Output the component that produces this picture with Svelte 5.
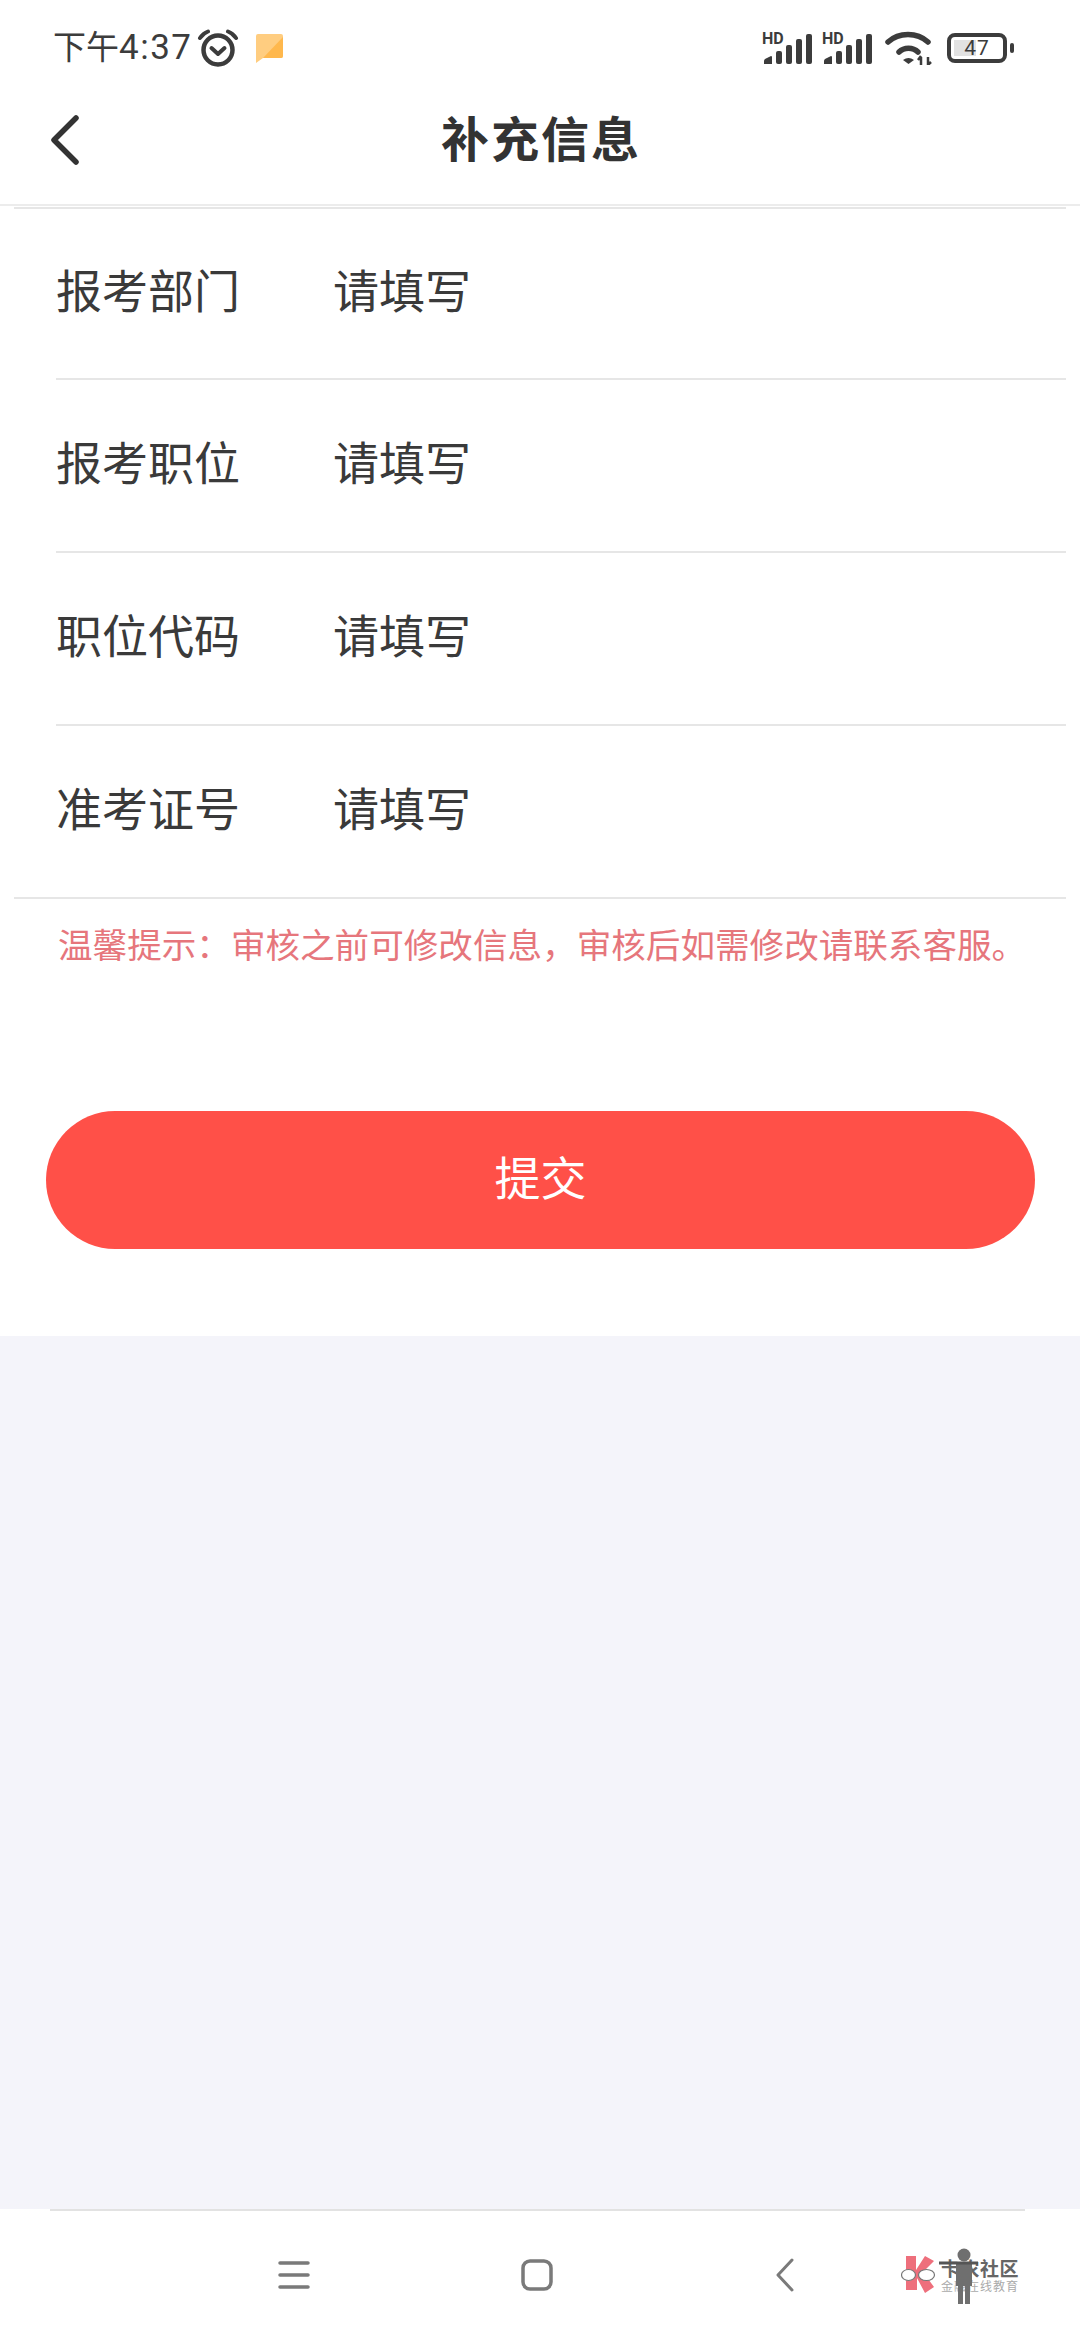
<script>
  const fields = [
    { label: "报考部门", value: "请填写" },
    { label: "报考职位", value: "请填写" },
    { label: "职位代码", value: "请填写" },
    { label: "准考证号", value: "请填写" }
  ];
</script>

<main>
  <div class="top">
    <div class="status">
      <div class="status-left">
        <span class="time">下午<span class="clock">4:37</span></span>
        <svg class="alarm" width="44" height="38" viewBox="0 0 44 38">
          <circle cx="22" cy="21" r="14.500" fill="none" stroke="#3c3c3c" stroke-width="4.500" />
          <path d="M15.500 19l6.500 6 6.500-6" fill="none" stroke="#3c3c3c" stroke-width="4" stroke-linecap="round" stroke-linejoin="round" />
          <path d="M4 9C6 6 8 4 12 2.500M40 9C38 6 36 4 32 2.500" fill="none" stroke="#3c3c3c" stroke-width="4" stroke-linecap="round" />
        </svg>
        <svg class="note" width="27" height="29" viewBox="0 0 27 29">
          <path d="M2 0h23a2 2 0 0 1 2 2v20a2 2 0 0 1-2 2H7l-7 5V2a2 2 0 0 1 2-2z" fill="#ffcd80" />
          <path d="M27 3v19a2 2 0 0 1-2 2H7z" fill="#ffb84d" />
        </svg>
      </div>
      <div class="status-right">
        {#each [0, 1] as s}
          <svg class="signal" width="50" height="34" viewBox="0 0 50 34">
            <text x="0" y="13" class="hd">HD</text>
            <path d="M2 33v-3q0-1 1-2l6-3q1 0 1 1v7z" fill="#3c3c3c" />
            <rect x="14" y="20" width="6" height="13" rx="2" fill="#3c3c3c" />
            <rect x="24" y="14" width="6" height="19" rx="2" fill="#3c3c3c" />
            <rect x="34" y="8" width="6" height="25" rx="2" fill="#3c3c3c" />
            <rect x="44" y="3" width="6" height="30" rx="2" fill="#3c3c3c" />
          </svg>
        {/each}
        <svg class="wifi" width="48" height="34" viewBox="0 0 48 34">
          <path d="M3 11C14 1 32 1 43 11" fill="none" stroke="#3c3c3c" stroke-width="5.500" stroke-linecap="round" />
          <path d="M14 21C19 16 28 16 33 21" fill="none" stroke="#3c3c3c" stroke-width="5.500" stroke-linecap="round" />
          <path d="M18 29q5.500-4 11 0l-5.500 4z" fill="#3c3c3c" />
          <path d="M36 34v-8m-3 3l3-4M43 26v8m3-3l-3 3" fill="none" stroke="#3c3c3c" stroke-width="2.500" />
        </svg>
        <div class="battery">
          <div class="battery-body">
            <span class="battery-fill"></span>
            <span class="battery-num">47</span>
          </div>
          <span class="battery-tip"></span>
        </div>
      </div>
    </div>

    <header>
      <svg class="back" width="30" height="50" viewBox="0 0 30 50">
        <path d="M26 3L4 25 26 47" fill="none" stroke="#333" stroke-width="5.500" stroke-linecap="round" stroke-linejoin="round" />
      </svg>
      <h1>补充信息</h1>
    </header>
  </div>

  <section class="card">
    <div class="form">
      {#each fields as f}
        <div class="row">
          <div class="row-inner">
            <span class="label">{f.label}</span>
            <span class="value">{f.value}</span>
          </div>
        </div>
      {/each}
    </div>
    <p class="tip">温馨提示：审核之前可修改信息，审核后如需修改请联系客服。</p>
    <button>提交</button>
  </section>

  <div class="filler"></div>

  <footer>
    <svg class="nav-menu" width="32" height="30" viewBox="0 0 32 30">
      <path d="M2 3h28M2 15h28M2 27h28" stroke="#7a7a7a" stroke-width="3.500" stroke-linecap="round" />
    </svg>
    <svg class="nav-home" width="32" height="32" viewBox="0 0 32 32">
      <rect x="2" y="2" width="28" height="28" rx="7" fill="none" stroke="#7a7a7a" stroke-width="3.500" />
    </svg>
    <svg class="nav-back" width="18" height="34" viewBox="0 0 18 34">
      <path d="M16 2L2 17l14 15" fill="none" stroke="#7a7a7a" stroke-width="3" stroke-linecap="round" stroke-linejoin="round" />
    </svg>
    <div class="logo">
      <svg width="36" height="38" viewBox="0 0 36 38">
        <path d="M5 0h10v14l9-14 9 5-11 11 11 15-9 6-8-15v12H5z" fill="#ee6f7c" />
        <ellipse cx="7.500" cy="19" rx="7" ry="5.500" fill="#fff" stroke="#777" stroke-width="1.200" />
        <ellipse cx="25.500" cy="19" rx="8" ry="5.500" fill="#fff" stroke="#777" stroke-width="1.200" />
      </svg>
      <div class="logo-text">
        <span class="logo-name">卡农社区</span>
        <span class="logo-sub">金融在线教育</span>
      </div>
      <svg class="person" width="78" height="56" viewBox="0 0 78 56">
        <circle cx="39" cy="7" r="6.500" fill="#6f6f6f" />
        <path d="M31 14h16v24h-2v18h-5V38h-2v18h-5V38h-2z" fill="#6f6f6f" />
        <path d="M14 15h39" stroke="#555" stroke-width="3" />
      </svg>
    </div>
  </footer>
</main>

<style>
  :global(body) {
    background: #f4f4fa;
  }

  main {
    width: 1080px;
    height: 2340px;
    display: flex;
    flex-direction: column;
    font-family: "Noto Sans CJK SC", "Noto Sans", sans-serif;
    color: #333;
  }

  .top {
    background: #fff;
    border-bottom: 2px solid #ececec;
  }

  .status {
    height: 92px;
    padding: 4px 66px 0 53px;
    display: flex;
    align-items: center;
    justify-content: space-between;
    box-sizing: border-box;
  }

  .status-left,
  .status-right {
    display: flex;
    align-items: center;
  }

  .time {
    font-size: 33px;
    font-family: Roboto, "Noto Sans CJK SC", sans-serif;
    color: #3c3c3c;
    line-height: 40px;
    width: 143px;
    white-space: nowrap;
  }

  .clock {
    font-size: 35px;
    letter-spacing: 1.500px;
  }

  .note {
    margin-left: 16px;
  }

  .signal {
    margin-right: 10px;
    overflow: visible;
  }

  .hd {
    font-family: Roboto, sans-serif;
    font-weight: 700;
    font-size: 16px;
    fill: #3c3c3c;
  }

  .wifi {
    margin: 0 14px 0 3px;
  }

  .battery {
    display: flex;
    align-items: center;
    gap: 3px;
  }

  .battery-body {
    position: relative;
    width: 60px;
    height: 30px;
    box-sizing: border-box;
    border: 4px solid #3c3c3c;
    border-radius: 8px;
    display: flex;
    align-items: center;
    justify-content: center;
  }

  .battery-fill {
    position: absolute;
    left: 3px;
    top: 3px;
    bottom: 3px;
    width: 22px;
    background: #e2e2e2;
  }

  .battery-num {
    position: relative;
    font-family: Roboto, sans-serif;
    font-size: 21px;
    line-height: 22px;
    letter-spacing: 1px;
    color: #3c3c3c;
  }

  .battery-tip {
    width: 4px;
    height: 10px;
    border-radius: 2px;
    background: #3c3c3c;
  }

  header {
    height: 112px;
    padding: 0 0 24px 2px;
    box-sizing: border-box;
    position: relative;
    display: flex;
    align-items: center;
    justify-content: center;
  }

  .back {
    position: absolute;
    left: 50px;
    top: 23px;
  }

  h1 {
    margin: 0;
    font-size: 48px;
    font-weight: 700;
    letter-spacing: 2px;
    line-height: 64px;
    color: #333;
  }

  .card {
    background: #fff;
    padding-bottom: 87px;
    display: flex;
    flex-direction: column;
  }

  .form {
    margin: 1px 14px 0;
    border-top: 2px solid #e6e6e6;
  }

  .row {
    padding-left: 42px;
  }

  .row:first-child .row-inner {
    height: 171px;
  }

  .row:last-child {
    padding-left: 0;
    border-bottom: 2px solid #e6e6e6;
  }

  .row:last-child .row-inner {
    padding-left: 42px;
    border-bottom: 0;
    height: 171px;
  }

  .row-inner {
    height: 173px;
    box-sizing: border-box;
    padding-bottom: 12px;
    border-bottom: 2px solid #e6e6e6;
    display: flex;
    align-items: center;
  }

  .label {
    width: 277px;
    font-size: 46px;
    line-height: 60px;
    color: #3a3a3a;
  }

  .value {
    font-size: 46px;
    line-height: 60px;
    color: #3a3a3a;
  }

  .tip {
    margin: 0;
    padding: 21px 0 0 58px;
    font-size: 34.600px;
    line-height: 46px;
    color: #e6767c;
    white-space: nowrap;
  }

  button {
    margin: 145px 45px 0 46px;
    height: 138px;
    border: none;
    border-radius: 69px;
    background: #ff5048;
    color: #fff;
    font-family: inherit;
    font-size: 46px;
    padding: 0 0 10px;
  }

  .filler {
    flex: 1;
    background: #f4f4fa;
  }

  footer {
    height: 131px;
    background: #fff;
    position: relative;
    display: flex;
    align-items: center;
    padding-left: 278px;
    box-sizing: border-box;
  }

  footer::before {
    content: "";
    position: absolute;
    left: 50px;
    right: 55px;
    top: 0;
    height: 2px;
    background: #e2e2e2;
  }

  .nav-home {
    margin-left: 211px;
  }

  .nav-back {
    margin-left: 223px;
  }

  .logo {
    margin-left: 107px;
    position: relative;
    display: flex;
    align-items: center;
    gap: 4px;
  }

  .logo-text {
    display: flex;
    flex-direction: column;
    white-space: nowrap;
  }

  .logo-name {
    font-size: 19px;
    line-height: 22px;
    font-weight: 700;
    color: #666;
    letter-spacing: 0.500px;
  }

  .logo-sub {
    font-size: 12px;
    line-height: 14px;
    letter-spacing: 1px;
    color: #aaa;
  }

  .person {
    position: absolute;
    left: 24px;
    top: -8px;
  }
</style>
